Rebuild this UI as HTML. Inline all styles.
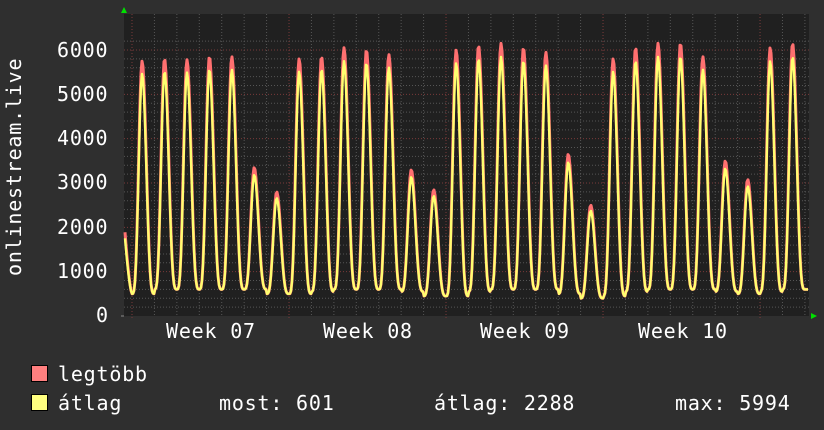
<!DOCTYPE html>
<html><head><meta charset="utf-8"><style>
html,body{margin:0;padding:0;background:#2f2f2f;}
body{width:824px;height:430px;overflow:hidden;position:relative;font-family:"DejaVu Sans Mono","Liberation Mono",monospace;color:#fff;}
.t{position:absolute;font-size:20px;letter-spacing:0.8px;white-space:pre;line-height:22px;}
.sq{position:absolute;width:15px;height:15px;border:1px solid #000;}
</style></head><body>
<svg id="g" width="824" height="430" style="position:absolute;left:0;top:0">
<rect x="124" y="14" width="685" height="302" fill="#202020"/>
<g id="grid"></g>
<path id="mx" fill="none" stroke="#ff7070" stroke-width="3" stroke-linejoin="round"/>
<path id="av" fill="none" stroke="#ffff70" stroke-width="2.4" stroke-linejoin="round"/>
<polygon points="121,13 127,13 124,7" fill="#00e000"/>
<polygon points="811,313 811,319 817,316" fill="#00e000"/>
</svg>
<div class="t" style="transform:rotate(-90deg);transform-origin:0 0;left:3px;top:276px">onlinestream.live</div>
<div class="t" style="left:57px;top:39px">6000</div>
<div class="t" style="left:57px;top:83px">5000</div>
<div class="t" style="left:57px;top:127px">4000</div>
<div class="t" style="left:57px;top:171px">3000</div>
<div class="t" style="left:57px;top:216px">2000</div>
<div class="t" style="left:57px;top:260px">1000</div>
<div class="t" style="left:96px;top:304px">0</div>
<div class="t" style="left:166px;top:320px">Week 07</div>
<div class="t" style="left:323px;top:320px">Week 08</div>
<div class="t" style="left:480px;top:320px">Week 09</div>
<div class="t" style="left:638px;top:320px">Week 10</div>
<div class="sq" style="left:31px;top:365px;background:#ff7f7f"></div>
<div class="sq" style="left:31px;top:394px;background:#ffff7f"></div>
<div class="t" style="left:58px;top:363px">legtöbb</div>
<div class="t" style="left:58px;top:392px">átlag</div>
<div class="t" style="left:219px;top:392px">most: 601</div>
<div class="t" style="left:434px;top:392px">átlag: 2288</div>
<div class="t" style="left:675px;top:392px">max: 5994</div>
<script>
var g=document.getElementById('grid'),h='';
var X0=124,X1=809,Y0=316,S=44.33/1000,D=22.43,xs=132;
function Y(v){return Y0-v*S;}
for(var v=200;v<=6200;v+=200){if(v%1000)h+='<line x1="124" x2="809" y1="'+Y(v)+'" y2="'+Y(v)+'" stroke="#555" stroke-dasharray="1,2"/>';}
for(var x=xs-D;x<X1;x+=D){if(x>X0&&Math.abs(((x-xs)/D)%7)>0.01)h+='<line y1="14" y2="316" x1="'+x+'" x2="'+x+'" stroke="#555" stroke-dasharray="1,2"/>';}
for(var v=1000;v<=6000;v+=1000)h+='<line x1="124" x2="809" y1="'+Y(v)+'" y2="'+Y(v)+'" stroke="#7a3a3a" stroke-dasharray="1,2"/>';
for(var x=xs;x<X1;x+=D*7)h+='<line y1="14" y2="319" x1="'+x+'" x2="'+x+'" stroke="#7a3a3a" stroke-dasharray="1,2"/>';
h+='<line x1="121" x2="124" y1="316" y2="316" stroke="#888"/>';
g.innerHTML=h;
var pk=[5750,5800,5780,5850,5850,3350,2800,5800,5850,6050,6000,5900,3300,2850,6000,6100,6150,6050,5950,3650,2500,5800,6050,6150,6150,5850,3500,3080,6050,6150];
var mn=[500,600,600,600,600,600,500,500,550,600,600,600,550,450,450,550,600,600,600,500,400,450,550,600,600,600,550,500,550,600];
function f(x,r){var t=(x-xs)/D;var i=Math.floor(t),fr=t-i;
 var p,m;
 if(i<0){return m=mn[0],m+(2200-m)*Math.pow((xs-x)/(xs-X0),1.5)*(r?1:0.9);}
 if(i>29){return 600;}
 p=pk[i];m=mn[i];
 var ph=fr<0.45?fr/0.45*0.5:0.5+(fr-0.45)/0.55*0.5;
 var c=Math.pow((1-Math.cos(2*Math.PI*ph))/2,1.8);
 return r?m+(p-m)*c:m+(p*0.95-m)*c;}
var a='',b='';
for(var x=X0+1;x<=X1-1;x+=1){a+=(x==X0+1?'M':'L')+x+','+Y(f(x,1)).toFixed(1);b+=(x==X0+1?'M':'L')+x+','+Y(f(x,0)).toFixed(1);}
document.getElementById('mx').setAttribute('d',a);
document.getElementById('av').setAttribute('d',b);
</script>
</body></html>
